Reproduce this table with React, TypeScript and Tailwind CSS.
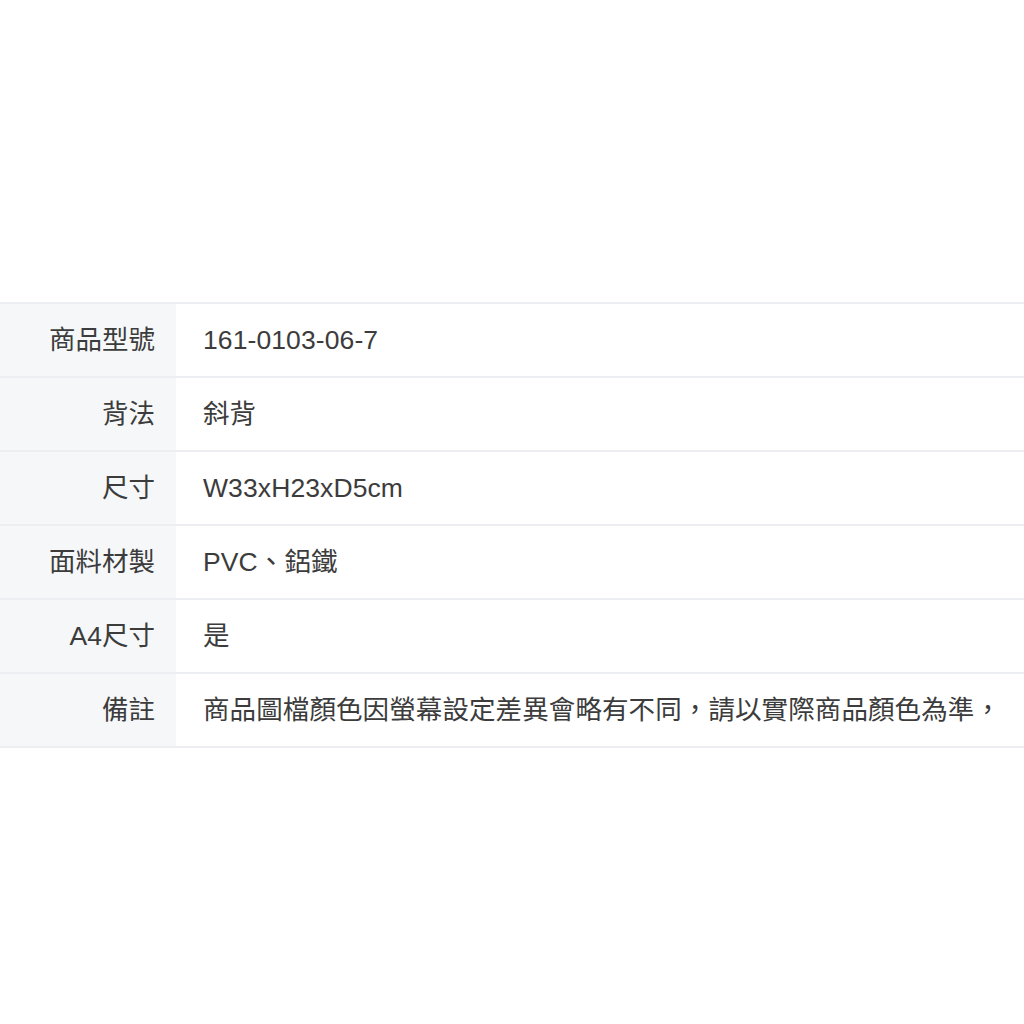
import React from "react";

const rows: [string, string][] = [
  ["商品型號", "161-0103-06-7"],
  ["背法", "斜背"],
  ["尺寸", "W33xH23xD5cm"],
  ["面料材製", "PVC、鋁鐵"],
  ["A4尺寸", "是"],
  ["備註", "商品圖檔顏色因螢幕設定差異會略有不同，請以實際商品顏色為準，"],
];

export default function App() {
  return (
    <div
      className="w-[1024px] h-[1024px] bg-white overflow-hidden pt-[302px]"
      style={{ fontFamily: '"Liberation Sans", "Noto Sans CJK TC", sans-serif' }}
    >
      <div className="flex flex-col border-b-2 border-[#eceef1]">
        {rows.map(([k, v]) => (
          <div key={k} className="flex h-[74px] border-t-2 border-[#eceef1]">
            <div className="w-[176px] shrink-0 bg-[#f6f7f9] flex items-center justify-end pr-[21px] pt-[2px] text-[26.5px] text-[#3c3c3c] whitespace-nowrap">
              {k}
            </div>
            <div className="flex-1 flex items-center pl-[27px] pt-[2px] text-[26.5px] tracking-[0.1px] text-[#3c3c3c] whitespace-nowrap overflow-hidden">
              {v}
            </div>
          </div>
        ))}
      </div>
    </div>
  );
}
